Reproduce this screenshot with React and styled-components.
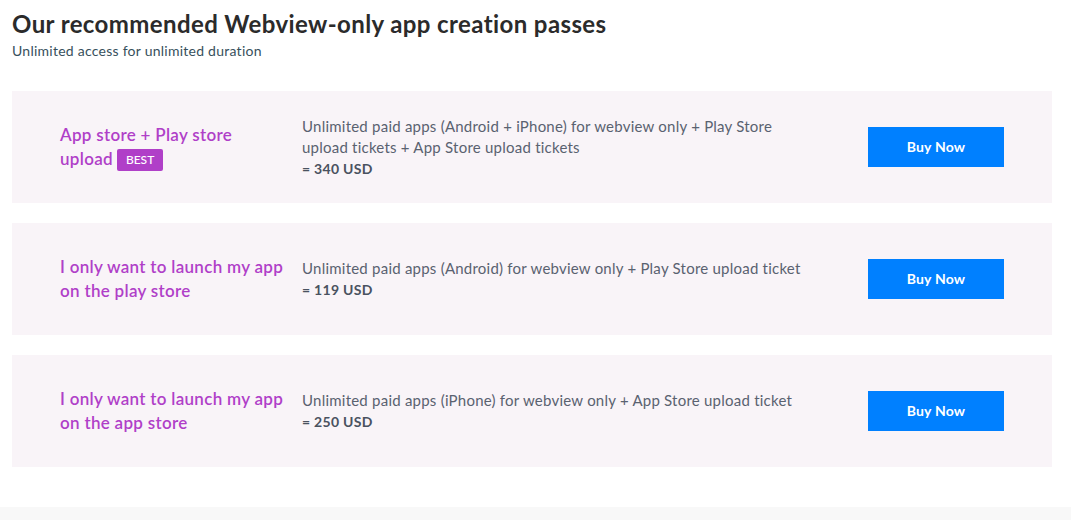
import React from "react";
import styled, {createGlobalStyle} from "styled-components";

const passes = [
  {
    title: "App store + Play store upload",
    best: true,
    description: "Unlimited paid apps (Android + iPhone) for webview only + Play Store upload tickets + App Store upload tickets",
    price: "= 340 USD"
  },
  {
    title: "I only want to launch my app on the play store",
    description: "Unlimited paid apps (Android) for webview only + Play Store upload ticket",
    price: "= 119 USD"
  },
  {
    title: "I only want to launch my app on the app store",
    description: "Unlimited paid apps (iPhone) for webview only + App Store upload ticket",
    price: "= 250 USD"
  }
];

const App = () => {
  return (
    <Page>
      <GlobalStyle/>
      <Section>
        <Heading>Our recommended Webview-only app creation passes</Heading>
        <Subtitle>Unlimited access for unlimited duration</Subtitle>
        <List>
          {passes.map((pass) => (
            <Card key={pass.price}>
              <PassTitle>
                {pass.title}
                {pass.best && <Badge>BEST</Badge>}
              </PassTitle>
              <Details>
                <Description>{pass.description}</Description>
                <Price>{pass.price}</Price>
              </Details>
              <BuyButton>Buy Now</BuyButton>
            </Card>
          ))}
        </List>
      </Section>
      <FooterStrip/>
    </Page>
  );
};

const GlobalStyle = createGlobalStyle`
  body {
    margin: 0;
    background: #ffffff;
    font-family: Lato, "Noto Sans", sans-serif;
  }
`;
const Page = styled.div`
  min-height: 520px;
  display: flex;
  flex-direction: column;
`;
const Section = styled.div`
  padding: 9px 19px 40px 12px;
`;
const Heading = styled.h1`
  margin: 0;
  font-size: 24px;
  line-height: 30px;
  font-weight: 700;
  letter-spacing: 0.4px;
  color: #2b2b2b;
`;
const Subtitle = styled.div`
  margin-top: 3px;
  font-size: 14px;
  line-height: 18px;
  letter-spacing: 0.25px;
  color: #37505c;
`;
const List = styled.div`
  margin-top: 31px;
  display: flex;
  flex-direction: column;
  gap: 20px;
`;
const Card = styled.div`
  height: 112px;
  box-sizing: border-box;
  padding: 0 48px;
  background: #f9f4f8;
  display: grid;
  grid-template-columns: 242px 1fr 136px;
  align-items: center;
`;
const PassTitle = styled.div`
  font-size: 17px;
  line-height: 24px;
  font-weight: 600;
  letter-spacing: 0.3px;
  color: #b03fc8;
  padding-right: 16px;
`;
const Badge = styled.span`
  display: inline-block;
  margin-left: 4px;
  padding: 0 9px;
  height: 22px;
  line-height: 22px;
  border-radius: 2px;
  background: #b03fc8;
  color: #ffffff;
  font-size: 12px;
  font-weight: 500;
  letter-spacing: 0;
  vertical-align: middle;
`;
const Details = styled.div`
  padding-right: 48px;
`;
const Description = styled.div`
  font-size: 15px;
  line-height: 21px;
  letter-spacing: 0.23px;
  color: #5a6270;
`;
const Price = styled.div`
  font-size: 14px;
  line-height: 21px;
  font-weight: 700;
  letter-spacing: 0.3px;
  color: #4a5260;
`;
const BuyButton = styled.button`
  width: 136px;
  height: 40px;
  padding: 0 0 2px;
  border: none;
  border-radius: 0;
  background: #0080ff;
  color: #ffffff;
  font-family: inherit;
  font-size: 14px;
  font-weight: 700;
  letter-spacing: 0.2px;
  cursor: pointer;
`;
const FooterStrip = styled.div`
  flex: 1;
  background: #f8f8f8;
`;

export default App;
